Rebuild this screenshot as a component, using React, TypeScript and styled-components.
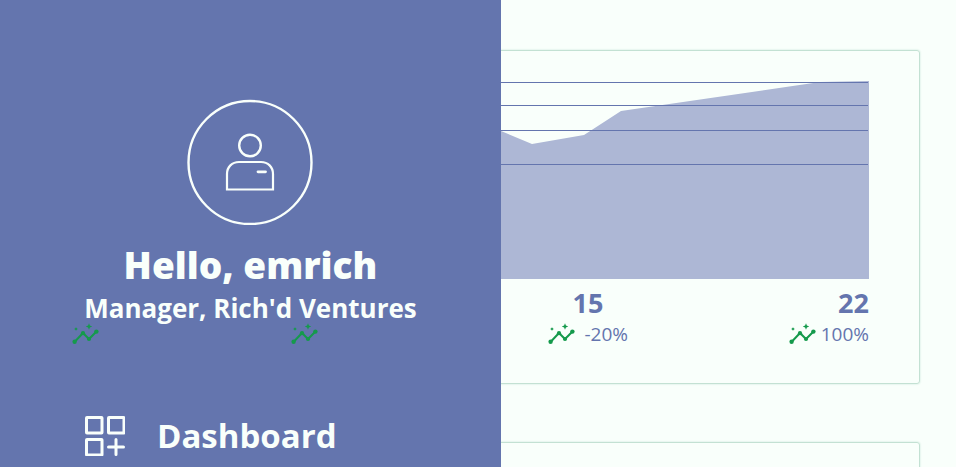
import React from 'react';
import styled, { createGlobalStyle } from 'styled-components';

const colors = { blue: '#6475ae', paper: '#f9fffb', area: '#adb7d5', line: '#c3e1d3', green: '#159a4c' };

const GlobalStyle = createGlobalStyle`
  * { box-sizing: border-box; }
  body {
    margin: 0;
    overflow: hidden;
    background: ${colors.paper};
    color: ${colors.blue};
    font-family: 'Open Sans', 'Noto Sans', sans-serif;
  }
`;

const Page = styled.div`
  position: relative;
  height: 100vh;
  overflow: hidden;
`;

const Main = styled.main`
  display: flex;
  flex-direction: column;
  gap: 58px;
  padding: 50px 36px 0 21px;
`;

const Card = styled.section`
  min-height: 334px;
  padding: 30px 50px;
  border: 1px solid ${colors.line};
  border-radius: 3px;
  box-shadow: 0 0 2px ${colors.line};
`;

const Chart = styled.svg`
  display: block;
  width: 100%;
  height: 198px;
`;

const Stats = styled.div`
  display: grid;
  grid-template-columns: 219fr 257fr 241fr 80px;
  align-items: end;
  margin-top: 8px;
`;

const Stat = styled.div<{ $align?: 'center' | 'end' }>`
  display: flex;
  flex-direction: column;
  width: 80px;
  align-items: ${(p) => p.$align ?? 'start'};
`;

const Day = styled.strong`
  font-size: 27px;
  line-height: 32px;
`;

const Change = styled.span`
  display: flex;
  align-items: center;
  justify-content: space-between;
  width: 100%;
  height: 30px;
  font-size: 19px;
  font-weight: 500;
  line-height: 30px;
`;

const TrendSvg = styled.svg`
  position: relative;
  z-index: 2;
  flex: none;
  width: 28px;
  height: 28px;
  color: ${colors.green};
`;

const Drawer = styled.aside`
  position: absolute;
  inset: 0 auto 0 0;
  z-index: 1;
  display: flex;
  flex-direction: column;
  align-items: center;
  width: 52.4%;
  padding-top: 99px;
  overflow: hidden;
  background: ${colors.blue};
  color: ${colors.paper};
`;

const Avatar = styled.svg`
  flex: none;
  width: 126px;
  height: 126px;
  fill: none;
  stroke: currentColor;
`;

const Greeting = styled.h1`
  margin: 16px 0 0;
  font-size: 37px;
  font-weight: 800;
  line-height: 48px;
  white-space: nowrap;
`;

const Role = styled.p`
  margin: 0;
  font-size: 26px;
  font-weight: 700;
  line-height: 38px;
  white-space: nowrap;
`;

const Nav = styled.nav`
  width: 100%;
  margin-top: 84px;
  padding-left: 85px;
`;

const NavLink = styled.a`
  display: flex;
  align-items: center;
  gap: 32px;
  color: inherit;
  font-size: 33px;
  font-weight: 700;
  line-height: 50px;
  text-decoration: none;
`;

const NavIcon = styled.svg`
  flex: none;
  width: 40px;
  height: 40px;
  fill: none;
  stroke: currentColor;
  stroke-width: 3;
`;

function TrendIcon() {
  return (
    <TrendSvg viewBox="0 0 28 28" aria-hidden="true">
      <path d="M2.5 22L11 13L17 19L24.5 11.5" fill="none" stroke="currentColor" strokeWidth="2" />
      <g fill="currentColor">
        <circle cx="2.6" cy="21.8" r="2.2" />
        <circle cx="11" cy="13.2" r="2.1" />
        <circle cx="17" cy="19" r="2.1" />
        <circle cx="24.4" cy="11.6" r="2.2" />
        <path d="M17 3.3L17.9 5.6L20.2 6.5L17.9 7.4L17 9.7L16.1 7.4L13.8 6.5L16.1 5.6Z" />
        <path d="M4 7.2L4.7 8.3L5.8 9L4.7 9.7L4 10.8L3.3 9.7L2.2 9L3.3 8.3Z" />
      </g>
    </TrendSvg>
  );
}

const gridLines = [1, 24, 49, 83];

type StatItem = { day?: string; change?: string; align?: 'center' | 'end' };

const stats: StatItem[] = [
  {},
  {},
  { day: '15', change: '-20%', align: 'center' },
  { day: '22', change: '100%', align: 'end' },
];

export default function App() {
  return (
    <Page>
      <GlobalStyle />
      <Main>
        <Card>
          <Chart viewBox="0 0 797 198" preserveAspectRatio="none" aria-hidden="true">
            <path
              d="M0 198V90L200 60L429 50L460 63L512 54L549 30L748 1L797 0V198Z"
              fill={colors.area}
            />
            {gridLines.map((y) => (
              <rect key={y} y={y} width="796" height="1" fill={colors.blue} />
            ))}
          </Chart>
          <Stats>
            {stats.map((s, i) => (
              <Stat key={i} $align={s.align}>
                {s.day && <Day>{s.day}</Day>}
                <Change>
                  <TrendIcon />
                  {s.change}
                </Change>
              </Stat>
            ))}
          </Stats>
        </Card>
        <Card />
      </Main>
      <Drawer>
        <Avatar viewBox="0 0 126 126" aria-hidden="true">
          <circle cx="63" cy="63.5" r="61.5" strokeWidth="2.4" />
          <circle cx="63" cy="46.5" r="10.8" strokeWidth="2.4" />
          <path d="M40 90.5V75C40 68 45 63 52 63H74C81 63 86 68 86 75V90.5Z" strokeWidth="2.2" />
          <path d="M71 72.8H78.5" strokeWidth="2.8" strokeLinecap="round" />
        </Avatar>
        <Greeting>Hello, emrich</Greeting>
        <Role>Manager, Rich'd Ventures</Role>
        <Nav>
          <NavLink href="#dashboard">
            <NavIcon viewBox="0 0 40 40" aria-hidden="true">
              <rect x="1.5" y="1.5" width="15.5" height="15.5" rx="0.5" />
              <rect x="23.5" y="1.5" width="15.5" height="15.5" rx="0.5" />
              <rect x="1.5" y="23.5" width="15.5" height="15.5" rx="0.5" />
              <path d="M31 23.5V38.5M23.5 31H38.5" strokeLinecap="round" />
            </NavIcon>
            Dashboard
          </NavLink>
        </Nav>
      </Drawer>
    </Page>
  );
}
